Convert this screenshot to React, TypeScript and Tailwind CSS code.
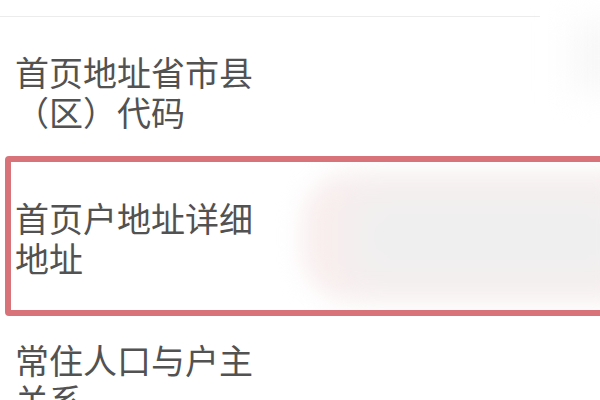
const font = { fontFamily: '"Noto Sans CJK SC", "Noto Sans", sans-serif' }

function Label({ text }: { text: string }) {
  return (
    <p className="w-[245px] text-[34px] leading-[40px] text-[#525252]" style={font}>
      {text}
    </p>
  )
}

export default function App() {
  return (
    <div className="w-[600px] h-[400px] overflow-hidden bg-white">
      <div className="h-[17px] w-[540px] border-b border-[#ececec]" />

      <div className="pl-[15px] pt-[35px] pb-[24px] relative">
        <Label text="首页地址省市县（区）代码" />
        <div className="absolute right-[-30px] top-[5px] h-[70px] w-[60px] bg-[#f8f8f8] blur-lg" />
      </div>

      <div className="ml-[5px] mr-[-30px] h-[160px] rounded-[4px] border-[6px] border-[#d8737a] flex items-center pl-[4px] gap-[42px] overflow-hidden">
        <div className="pt-[4px]">
          <Label text="首页户地址详细地址" />
        </div>
        <div className="flex-1 h-[128px] mt-[2px] rounded-l-[50px] bg-[#f9eeee] blur-md flex items-center pl-[50px]">
          <div className="h-[90px] w-full bg-[#efefef] blur-lg" />
        </div>
      </div>

      <div className="pl-[15px] pt-[24px]">
        <Label text="常住人口与户主关系" />
      </div>
    </div>
  )
}
